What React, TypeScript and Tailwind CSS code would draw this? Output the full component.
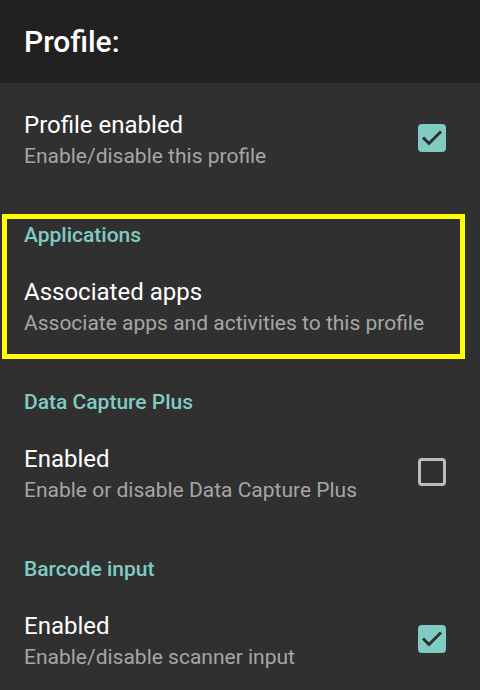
import { useState } from 'react';

interface PrefRowProps {
  title: string;
  summary: string;
  checked?: boolean;
  onToggle?: () => void;
}

function CheckBox({ checked }: { checked: boolean }) {
  if (checked) {
    return (
      <div className="w-[28px] h-[28px] rounded-[4px] bg-[#80cbc4] flex items-center justify-center">
        <svg viewBox="0 0 28 28" className="w-[28px] h-[28px]">
          <polyline points="5,13.5 11,19.5 23,7.5" fill="none" stroke="#303030" strokeWidth="3" />
        </svg>
      </div>
    );
  }
  return <div className="w-[28px] h-[28px] rounded-[4px] border-[3px] border-[#bcbcbc]" />;
}

function PrefRow({ title, summary, checked, onToggle }: PrefRowProps) {
  return (
    <div className="flex items-center pl-6 pr-[34px] pt-[26px] pb-[21px]" onClick={onToggle}>
      <div className="flex-1">
        <div className="text-[24px] leading-[32px] text-white">{title}</div>
        <div className="text-[21px] leading-[30px] text-[#a6a6a6]">{summary}</div>
      </div>
      {checked !== undefined && (
        <div className="mb-[5px]">
          <CheckBox checked={checked} />
        </div>
      )}
    </div>
  );
}

function Category({ label }: { label: string }) {
  return (
    <div className="pl-6 pt-[28px] text-[21px] leading-[30px] font-medium text-[#80cbc4]">{label}</div>
  );
}

export default function App() {
  const [profileOn, setProfileOn] = useState(true);
  const [dcpOn, setDcpOn] = useState(false);
  const [barcodeOn, setBarcodeOn] = useState(true);

  return (
    <div className="w-[480px] h-[690px] overflow-hidden bg-[#303030] font-[Roboto,sans-serif]">
      {/* Toolbar */}
      <div className="h-[83px] bg-[#212121] flex items-center pl-6">
        <h1 className="text-[30px] leading-[40px] font-medium text-white">Profile:</h1>
      </div>

      <PrefRow
        title="Profile enabled"
        summary="Enable/disable this profile"
        checked={profileOn}
        onToggle={() => setProfileOn(!profileOn)}
      />

      {/* Highlighted section */}
      <div className="relative">
        <Category label="Applications" />
        <PrefRow title="Associated apps" summary="Associate apps and activities to this profile" />
        <div className="absolute left-[2px] right-[15px] top-[22px] bottom-0 border-[5px] border-[#ffff00] pointer-events-none" />
      </div>

      <Category label="Data Capture Plus" />
      <PrefRow
        title="Enabled"
        summary="Enable or disable Data Capture Plus"
        checked={dcpOn}
        onToggle={() => setDcpOn(!dcpOn)}
      />

      <Category label="Barcode input" />
      <PrefRow
        title="Enabled"
        summary="Enable/disable scanner input"
        checked={barcodeOn}
        onToggle={() => setBarcodeOn(!barcodeOn)}
      />
    </div>
  );
}
